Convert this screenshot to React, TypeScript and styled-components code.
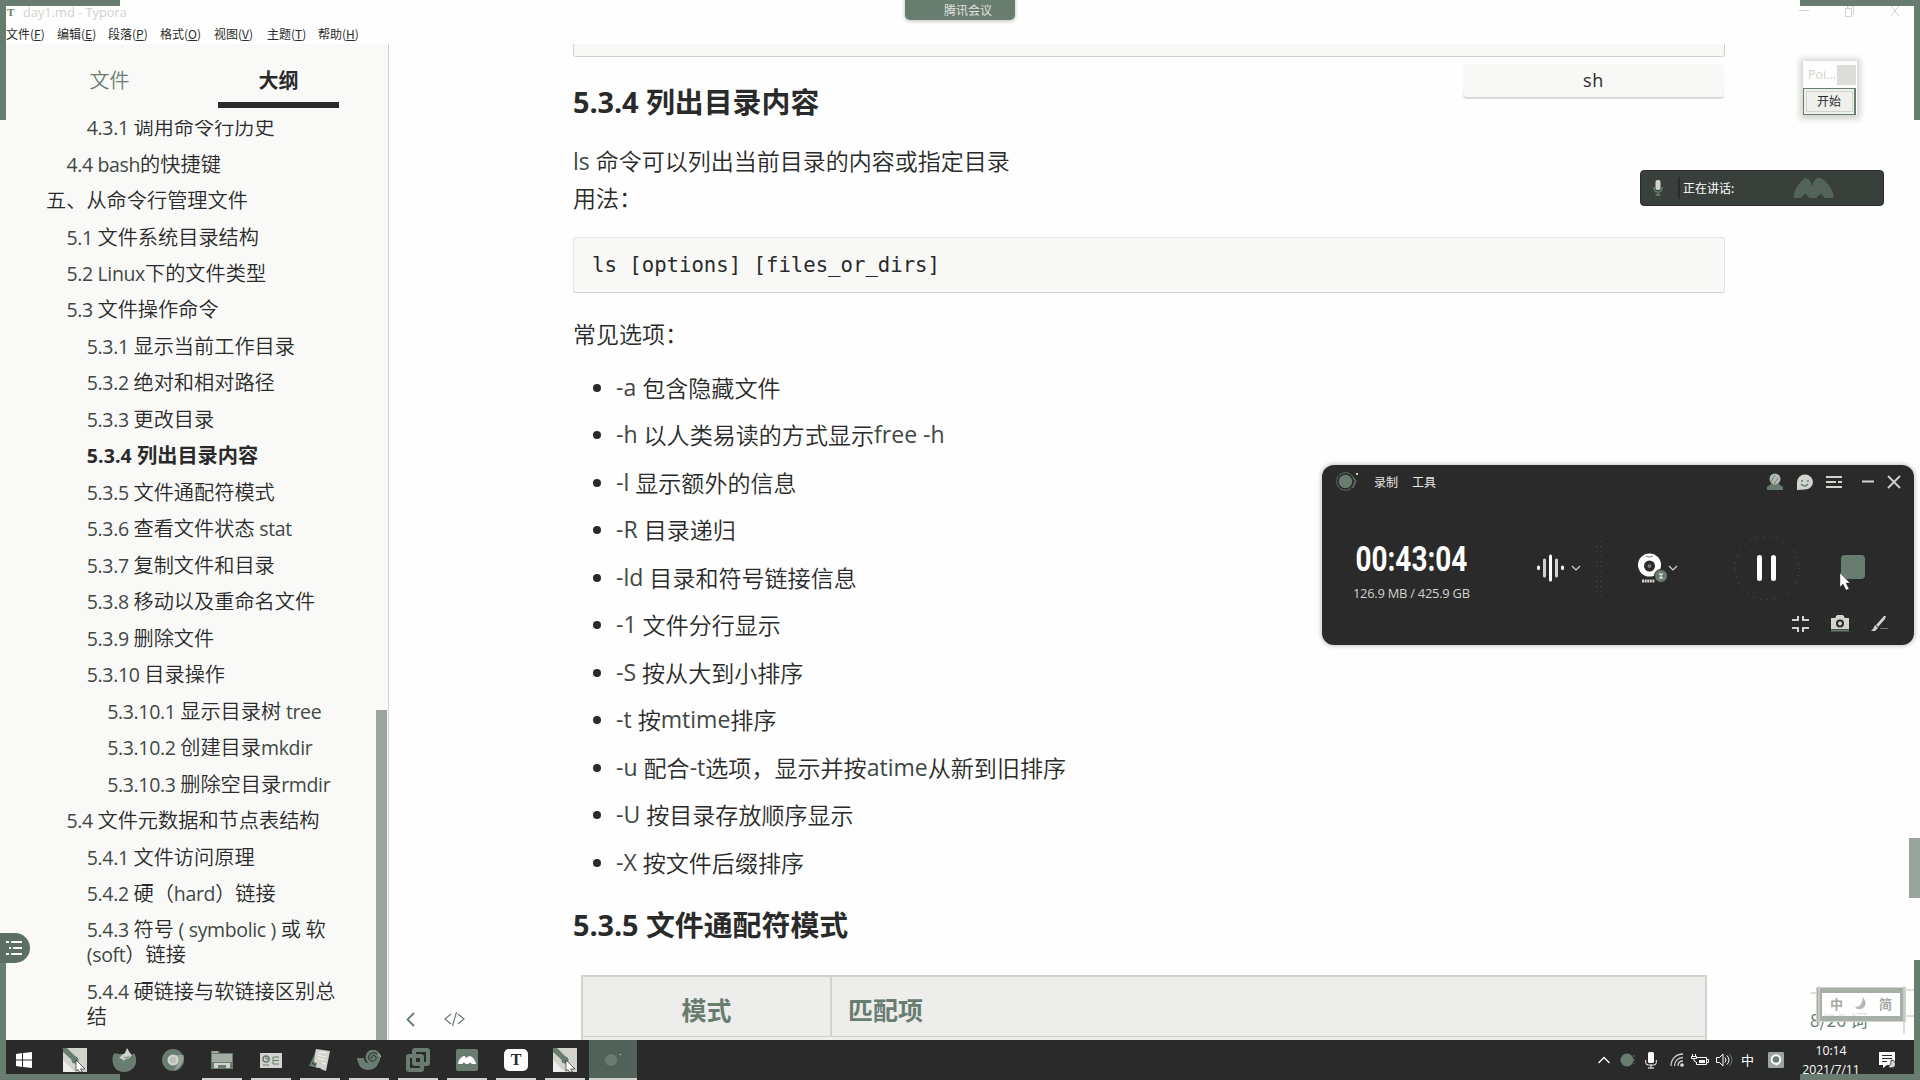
import React from 'react';
import styled, { createGlobalStyle } from 'styled-components';

const ink = '#2a2a2a';
const green = '#687c70';
const pale = '#d2d3cd';
const paper = '#fdfefd';
const cjk = '"Noto Sans CJK SC", sans-serif';

const GlobalStyle = createGlobalStyle`
  * { box-sizing: border-box; }
  html, body { margin: 0; padding: 0; }
  body { width: 1920px; height: 1080px; overflow: hidden; background: ${paper}; color: ${ink}; font-family: "Open Sans", ${cjk}; }
`;

const Screen = styled.div`
  position: relative;
  width: 1920px;
  height: 1080px;
  overflow: hidden;
  display: flex;
  flex-direction: column;
`;

const Run = styled.span<{ $track: number; $size?: number; $bold?: boolean }>`
  letter-spacing: ${p => p.$track}px;
  font-family: "Open Sans", ${cjk};
  font-weight: ${p => (p.$bold ? 700 : 400)};
  color: ${p => (p.$bold ? ink : '#414844')};
  line-height: 0;
  ${p => (p.$size ? `font-size: ${p.$size}px;` : '')}
`;

function Mixed({ text, track, size, bold }: { text: string; track: number; size?: number; bold?: boolean }) {
  return (
    <>
      {text.split(/([\x20-\x7e]+)/).filter(Boolean).map((s, i) =>
        /^[\x20-\x7e]/.test(s) ? <Run key={i} $track={track} $size={size} $bold={bold}>{s}</Run> : s
      )}
    </>
  );
}

/* ---------- title and menu ---------- */
const TitleBar = styled.header`
  height: 22px;
  flex: none;
  display: flex;
  align-items: center;
  padding: 2px 19px 0 7px;
  color: ${pale};
  font-size: 12.8px;
`;
const AppGlyph = styled.span`
  width: 16px;
  font: bold 11px "Liberation Serif", serif;
  color: ${green};
`;
const WindowTitle = styled.span`
  flex: 1;
  white-space: nowrap;
`;
const MenuBar = styled.nav`
  height: 22px;
  flex: none;
  display: flex;
  padding: 0 0 0 6px;
  font: 12px/23px ${cjk};
`;
const MenuItem = styled.span<{ $w: number }>`
  width: ${p => p.$w}px;
  white-space: nowrap;
`;
const Body = styled.div`
  display: flex;
  height: 996px;
  flex: none;
`;

/* ---------- outline sidebar ---------- */
const Sidebar = styled.aside`
  width: 389px;
  flex: none;
  background: #f9faf8;
  border-right: 1px solid ${pale};
  display: flex;
  flex-direction: column;
`;
const Tabs = styled.div`
  height: 64px;
  flex: none;
  display: flex;
  padding-left: 49px;
  gap: 48px;
`;
const Tab = styled.div<{ $active?: boolean }>`
  width: 121px;
  text-align: center;
  font: ${p => (p.$active ? 700 : 350)} 20px/72px ${cjk};
  color: ${p => (p.$active ? ink : green)};
  border-bottom: 6px solid ${p => (p.$active ? ink : 'transparent')};
`;
const OutlineArea = styled.div`
  margin-top: 12px;
  flex: 1;
  min-height: 0;
  overflow: hidden;
  display: flex;
`;
const Outline = styled.ul`
  list-style: none;
  margin: -11.6px 0 0;
  padding: 0;
  width: 376px;
`;
const OutlineItem = styled.li<{ $depth: number; $active?: boolean }>`
  padding: 5.74px 20px 5.74px ${p => 46 + p.$depth * 20.4}px;
  font: ${p => (p.$active ? 700 : 350)} 20.2px/25px ${cjk};
  white-space: pre-line;
`;
const OutlineThumb = styled.div`
  margin-top: 590px;
  width: 11px;
  background: #9aa69d;
  flex: none;
`;

const outline: [number, string][] = [
  [2, '4.3.1 调用命令行历史'],
  [1, '4.4 bash的快捷键'],
  [0, '五、从命令行管理文件'],
  [1, '5.1 文件系统目录结构'],
  [1, '5.2 Linux下的文件类型'],
  [1, '5.3 文件操作命令'],
  [2, '5.3.1 显示当前工作目录'],
  [2, '5.3.2 绝对和相对路径'],
  [2, '5.3.3 更改目录'],
  [2, '5.3.4 列出目录内容'],
  [2, '5.3.5 文件通配符模式'],
  [2, '5.3.6 查看文件状态 stat'],
  [2, '5.3.7 复制文件和目录'],
  [2, '5.3.8 移动以及重命名文件'],
  [2, '5.3.9 删除文件'],
  [2, '5.3.10 目录操作'],
  [3, '5.3.10.1 显示目录树 tree'],
  [3, '5.3.10.2 创建目录mkdir'],
  [3, '5.3.10.3 删除空目录rmdir'],
  [1, '5.4 文件元数据和节点表结构'],
  [2, '5.4.1 文件访问原理'],
  [2, '5.4.2 硬（hard）链接'],
  [2, '5.4.3 符号 ( symbolic ) 或 软\n(soft）链接'],
  [2, '5.4.4 硬链接与软链接区别总\n结'],
];

/* ---------- document ---------- */
const Doc = styled.main`
  position: relative;
  flex: 1;
  overflow: hidden;
  padding-left: 184px;
`;
const PreviousBlock = styled.div`
  width: 1152px;
  height: 13px;
  background: #f8f8f6;
  border: 1px solid ${pale};
  border-top: 0;
  border-radius: 0 0 3px 3px;
`;
const Heading = styled.h4<{ $top: number }>`
  margin: ${p => p.$top}px 0 0;
  font: 700 28.9px/36px ${cjk};
`;
const Paragraph = styled.p<{ $top: number }>`
  margin: ${p => p.$top}px 0 0;
  font: 350 23px/36.5px ${cjk};
  white-space: pre-line;
`;
const CodeBlock = styled.pre`
  margin: 22px 0 0;
  width: 1152px;
  height: 56px;
  padding: 0 18px;
  background: #f8f8f6;
  border: 1px solid #e4e5e1;
  border-bottom-color: ${pale};
  border-radius: 3px;
  font: 20.65px/55px "DejaVu Sans Mono", monospace;
`;
const Options = styled.ul`
  list-style: none;
  margin: 12px 0 0;
  padding: 0 0 0 20px;
`;
const Option = styled.li`
  height: 47.5px;
  display: flex;
  align-items: center;
  font: 350 23.05px/36px ${cjk};
  white-space: pre;
  &::before {
    content: '';
    width: 8px;
    height: 8px;
    margin: 2px 15px 0 0;
    border-radius: 50%;
    background: ${ink};
  }
`;
const options = [
  '-a 包含隐藏文件',
  '-h 以人类易读的方式显示free -h',
  '-l 显示额外的信息',
  '-R 目录递归',
  '-ld 目录和符号链接信息',
  '-1 文件分行显示',
  '-S 按从大到小排序',
  '-t 按mtime排序',
  '-u 配合-t选项，显示并按atime从新到旧排序',
  '-U 按目录存放顺序显示',
  '-X 按文件后缀排序',
];
const Table = styled.div`
  margin: 34px 0 0 8px;
  width: 1126px;
  height: 80px;
  display: grid;
  grid-template-columns: 249px 1fr;
  grid-template-rows: 60px 20px;
  background: #ededec;
  border: 2px solid ${pale};
`;
const Th = styled.div<{ $center?: boolean }>`
  font: 700 25px/65px ${cjk};
  color: ${green};
  padding-left: ${p => (p.$center ? 0 : 16)}px;
  text-align: ${p => (p.$center ? 'center' : 'left')};
  border-right: ${p => (p.$center ? `2px solid ${pale}` : '0')};
  border-bottom: 1px solid ${pale};
`;

const LangTag = styled.div`
  position: absolute;
  left: 1463px;
  top: 64px;
  width: 261px;
  height: 34px;
  background: #f8f8f6;
  border-bottom: 1px solid ${pale};
  border-radius: 4px;
  box-shadow: 0 1px 1px #dcddd9;
  text-align: center;
  font: 18px/32px "Open Sans", sans-serif;
  letter-spacing: 0.6px;
`;
const EditorTools = styled.div`
  position: absolute;
  left: 405px;
  top: 1009px;
  display: flex;
  gap: 26px;
`;
const WordCount = styled.div`
  position: absolute;
  left: 1810px;
  top: 1007px;
  font: 17.5px/26px ${cjk};
  color: ${green};
  white-space: nowrap;
`;
const PageThumb = styled.div`
  position: absolute;
  left: 1909px;
  top: 838px;
  width: 11px;
  height: 60px;
  background: #99a49c;
`;
const OutlineToggle = styled.div`
  position: absolute;
  left: 0;
  top: 933px;
  width: 30px;
  height: 30px;
  border-radius: 0 15px 15px 0;
  background: #5d6e64;
`;

/* ---------- floating windows ---------- */
const MeetingTag = styled.div`
  position: absolute;
  left: 905px;
  top: 0;
  width: 110px;
  height: 20px;
  padding-left: 39px;
  background: ${green};
  border-radius: 0 0 5px 5px;
  box-shadow: 0 1px 3px 1px ${pale};
  color: #e0e1dc;
  font: 12px/20px ${cjk};
`;
const PointWindow = styled.div`
  position: absolute;
  left: 1803px;
  top: 61px;
  width: 54px;
  height: 54px;
  display: flex;
  flex-direction: column;
  background: ${paper};
  box-shadow: 0 1px 6px 3px ${pale};
`;
const PointTitle = styled.div`
  height: 27px;
  display: flex;
  justify-content: space-between;
  padding: 4px 1px 3px 5px;
  font: 12.5px/19px "Open Sans", sans-serif;
  color: ${pale};
`;
const PointClose = styled.span`
  width: 19px;
  background: #dcddd8;
`;
const PointButton = styled.div`
  flex: 1;
  margin: 0 1px 0 0;
  border: 1px solid ${green};
  border-width: 1px 2px 1px 1px;
  outline: 1px solid ${pale};
  outline-offset: -4px;
  background: #efefec;
  text-align: center;
  font: 12px/24px ${cjk};
`;
const TalkBar = styled.div`
  position: absolute;
  left: 1640px;
  top: 170px;
  width: 244px;
  height: 36px;
  display: flex;
  align-items: center;
  background: #39403c;
  border: 1px solid ${ink};
  border-radius: 4px;
  padding-left: 12px;
  color: ${paper};
  font: 12px/36px ${cjk};
`;
const TalkDivider = styled.i`
  width: 2px;
  height: 22px;
  margin: 0 3px 0 15px;
  background: ${ink};
`;
const TalkLabel = styled.span`
  width: 109px;
`;

const Recorder = styled.section`
  position: absolute;
  left: 1322px;
  top: 465px;
  width: 592px;
  height: 180px;
  border-radius: 12px;
  background: ${ink};
  box-shadow: 0 0 4px 1px #c3c5bf;
  color: ${pale};
`;
const RecHead = styled.div`
  height: 34px;
  display: flex;
  align-items: center;
  padding: 0 8px 0 14px;
  font: 12px/34px ${cjk};
`;
const RecMenu = styled.span`
  margin-left: 14px;
  color: #e6e7e3;
`;
const Spacer = styled.span`
  flex: 1;
`;
const RecHeadIcons = styled.div`
  display: flex;
  align-items: center;
`;
const RecMain = styled.div`
  height: 106px;
  display: flex;
  align-items: center;
  padding: 30px 0 0 31px;
`;
const Clock = styled.div`
  width: 168px;
  padding-top: 9px;
`;
const Time = styled.div`
  width: 160px;
  font: 700 34.5px/36px Roboto, sans-serif;
  color: ${paper};
  transform: scaleX(0.81);
  transform-origin: 0 0;
  padding-left: 3px;
`;
const Storage = styled.div`
  padding-top: 7px;
  font: 12.9px/18px "Open Sans", sans-serif;
  letter-spacing: -0.25px;
  white-space: nowrap;
`;
const RecFoot = styled.div`
  height: 40px;
  display: flex;
  justify-content: flex-end;
  padding: 9px 26px 0 0;
  gap: 20px;
`;

/* ---------- taskbar ---------- */
const Taskbar = styled.footer`
  height: 40px;
  flex: none;
  display: flex;
  background: ${ink};
  color: ${paper};
`;
const TaskSlot = styled.div<{ $open?: boolean; $active?: boolean; $w?: number }>`
  width: ${p => p.$w ?? 49}px;
  padding-right: ${p => (p.$w === 50 ? 2 : 0)}px;
  display: flex;
  align-items: center;
  justify-content: center;
  background: ${p => (p.$active ? '#52625a' : 'transparent')};
  box-shadow: ${p => (p.$active ? 'inset 0 -2px ' + pale : 'none')};
  background-image: ${p => (p.$open ? `linear-gradient(${pale}, ${pale})` : 'none')};
  background-size: 40px 2px;
  background-position: center bottom;
  background-repeat: no-repeat;
`;
const Tray = styled.div`
  margin-left: auto;
  display: flex;
  align-items: center;
  padding-right: 18px;
  svg { flex: none; }
`;
const TrayItem = styled.div<{ $w: number }>`
  width: ${p => p.$w}px;
  display: flex;
  justify-content: center;
  font: 13px/18px ${cjk};
`;
const DateTime = styled.div`
  width: 82px;
  text-align: center;
  white-space: pre-line;
  font: 12.3px/19px "Open Sans", sans-serif;
  letter-spacing: -0.1px;
`;

const Edge = styled.i<{ $x: number; $y: number; $w: number; $h: number }>`
  position: absolute;
  left: ${p => p.$x}px;
  top: ${p => p.$y}px;
  width: ${p => p.$w}px;
  height: ${p => p.$h}px;
  background: ${green};
`;
const Layer = styled.svg<{ $x: number; $y: number }>`
  position: absolute;
  left: ${p => p.$x}px;
  top: ${p => p.$y}px;
`;
const ImeBar = styled.div`
  position: absolute;
  left: 1817px;
  top: 988px;
  width: 88px;
  height: 33px;
  display: flex;
  align-items: center;
  justify-content: space-around;
  padding: 0 2px 2px 2px;
  border: 5px solid #a5afa6;
  outline: 1px solid ${pale};
  background: #fdfefdcc;
  color: #a3aba3;
  font: 700 13px/18px ${cjk};
`;

const Disc = () => (
  <svg width="24" height="24" viewBox="0 0 24 24">
    <rect width="24" height="24" fill={pale} />
    <path d="M0 12v12h12z" fill="#eeefec" />
    <path d="M0 0h4l9 9-3 4L0 4z" fill={green} />
    <circle cx="12" cy="12" r="3.5" fill={green} />
    <path d="M13 12l9 9h-4.5l2 3h-3L15 21.5 13 23z" fill={paper} stroke={ink} strokeWidth=".7" />
  </svg>
);
const Peaks = ({ color = paper, w = 20 }: { color?: string; w?: number }) => (
  <svg width={w} height={w * 0.55} viewBox="0 0 20 11">
    <path d="M1 10C0 7 4 2 6 1c2 0 3 2 3 4 1-3 2-5 4-4 3 1 6 6 6 9h-4l-2-2-2 2H8L6 8l-2 2z" fill={color} />
  </svg>
);
const Logo = () => (
  <svg width="24" height="20" viewBox="0 0 24 20">
    <circle cx="9.500" cy="9.500" r="8.8" fill="none" stroke={green} strokeDasharray="3.5 .7" />
    <circle cx="9.500" cy="9.500" r="6.7" fill={green} />
    <path d="M17 5l3 4-3 7" fill="none" stroke={green} />
    <rect x="20" y="1" width="2" height="2" fill={pale} />
  </svg>
);

const menus: [string, string, number][] = [
  ['文件', 'F', 51], ['编辑', 'E', 51], ['段落', 'P', 52], ['格式', 'O', 54],
  ['视图', 'V', 53], ['主题', 'T', 51], ['帮助', 'H', 50],
];

export default function App() {
  return (
    <>
      <GlobalStyle />
      <Screen>
        <TitleBar>
          <AppGlyph>T</AppGlyph>
          <WindowTitle>day1.md - Typora</WindowTitle>
          <svg width="102" height="12" viewBox="0 0 102 12" fill="none" stroke={pale}>
            <path d="M0 4.500h10M46.500 2.500h6v8h-6zM48.500 2v-2h6v8h-2M92 0l8 10M100 0l-8 10" />
          </svg>
        </TitleBar>
        <MenuBar>
          {menus.map(([name, key, w]) => (
            <MenuItem key={key} $w={w}>{name}(<u>{key}</u>)</MenuItem>
          ))}
        </MenuBar>
        <Body>
          <Sidebar>
            <Tabs>
              <Tab>文件</Tab>
              <Tab $active>大纲</Tab>
            </Tabs>
            <OutlineArea>
              <Outline>
                {outline.map(([depth, text]) => {
                  const active = text.startsWith('5.3.4');
                  return (
                    <OutlineItem key={text} $depth={depth} $active={active}>
                      <Mixed text={text} track={active ? 0.1 : -0.35} size={19.5} bold={active} />
                    </OutlineItem>
                  );
                })}
              </Outline>
              <OutlineThumb />
            </OutlineArea>
          </Sidebar>
          <Doc>
            <PreviousBlock />
            <Heading $top={24.5}><Mixed text="5.3.4 列出目录内容" track={-0.1} bold /></Heading>
            <Paragraph $top={24.5}><Mixed text={'ls 命令可以列出当前目录的内容或指定目录\n用法：'} track={0} /></Paragraph>
            <CodeBlock>ls [options] [files_or_dirs]</CodeBlock>
            <Paragraph $top={21.500}>常见选项：</Paragraph>
            <Options>
              {options.map(o => <Option key={o}><Mixed text={o} track={0} /></Option>)}
            </Options>
            <Heading $top={19}><Mixed text="5.3.5 文件通配符模式" track={-0.1} bold /></Heading>
            <Table>
              <Th $center>模式</Th>
              <Th>匹配项</Th>
            </Table>
          </Doc>
        </Body>
        <Taskbar>
          <TaskSlot $w={50}>
            <svg width="16" height="16" viewBox="0 0 16 16" fill={paper}>
              <path d="M0 2l6-1v6.500H0zM7 1l9-1v7.500H7zM0 8.500h6V15l-6-1zM7 8.500h9V16l-9-1z" />
            </svg>
          </TaskSlot>
          <TaskSlot><Disc /></TaskSlot>
          <TaskSlot>
            <svg width="24" height="24" viewBox="0 0 24 24">
              <path d="M1 7l2-2 1 1 1-1 1 1 6 0 2 2 6-1 2-2 1 2c4 8-2 17-11 17S-1 16 1 7z" fill={green} />
              <path d="M13 5l2-5 3 5 2 2-3 3-3 1-2 3-2-3-3-1 3-3z" fill={pale} />
              <path d="M12 9l2 1 3-2M11 12l4 1" stroke={green} fill="none" />
            </svg>
          </TaskSlot>
          <TaskSlot>
            <svg width="22" height="22" viewBox="0 0 22 22">
              <circle cx="11" cy="11" r="11" fill={green} />
              <path d="M11 6h10.500c1 7-3 13-9.500 15.500l3-6z" fill="#96a199" />
              <circle cx="11" cy="11" r="5.500" fill={pale} />
              <circle cx="11" cy="11" r="3.300" fill="#b9bfb7" />
            </svg>
          </TaskSlot>
          <TaskSlot $open>
            <svg width="22" height="18" viewBox="0 0 22 18">
              <path d="M0 0h8l1 2h13v16H0z" fill={green} />
              <path d="M1 3h20v8H1z" fill="#a3ada4" />
              <path d="M3 17v-5h16v5h-4v-3H7v3z" fill={pale} />
              <path d="M1 1h6" stroke={pale} />
            </svg>
          </TaskSlot>
          <TaskSlot $open>
            <svg width="22" height="15" viewBox="0 0 22 15">
              <rect width="22" height="15" fill={pale} />
              <circle cx="6" cy="6" r="3" fill="none" stroke={green} strokeWidth="1.500" />
              <path d="M6 3v3h3M13 4h6M13 7.500h6M13 11h6M13 4v7M3 12h6" stroke={green} fill="none" />
            </svg>
          </TaskSlot>
          <TaskSlot $open>
            <svg width="22" height="22" viewBox="0 0 22 22">
              <path d="M7 0l14 2-4 20-14-5z" fill={pale} />
              <path d="M9 3l9 1M8 6l9 2M8 9l8 2M13 14l4 1" stroke="#f0f1ee" />
              <path d="M6 4l-6 13 7 1 1-4-3-1z" fill={green} />
              <path d="M3 14l3 2M9 19l3 1" stroke={ink} />
            </svg>
          </TaskSlot>
          <TaskSlot $open>
            <svg width="24" height="20" viewBox="0 0 24 20">
              <path d="M0 8h7c0 3 2 5 5 5 5 1 9-1 11-5-1 7-5 12-12 12C4 20 1 15 0 8z" fill={green} />
              <circle cx="16" cy="7" r="7.500" fill={green} />
              <path d="M15 9c-2-3 3-5 4-2 1 4-5 6-7 2-2-5 5-8 8-5" fill="none" stroke={ink} />
              <path d="M22 4l2 3" stroke={pale} />
            </svg>
          </TaskSlot>
          <TaskSlot $open>
            <svg width="24" height="24" viewBox="0 0 24 24" fill="none" stroke={green} strokeWidth="4">
              <rect x="8" y="2" width="14" height="14" rx="1" />
              <rect x="2" y="8" width="14" height="14" rx="1" />
              <path d="M8 16V8h8" strokeWidth="2.500" />
            </svg>
          </TaskSlot>
          <TaskSlot $open>
            <svg width="22" height="22" viewBox="0 0 22 22">
              <rect width="22" height="22" rx="2" fill={green} />
              <path d="M2 15c0-4 4-8 6-8 1 0 2 1 2.500 2.500C11 8 12 7 14 7c3 1 6 5 6 8h-4l-2-1.500-2 1.500h-2L8 13.500 6 15z" fill={paper} />
            </svg>
          </TaskSlot>
          <TaskSlot $open>
            <svg width="24" height="22" viewBox="0 0 24 22">
              <rect width="24" height="22" rx="5" fill={paper} />
              <text x="12" y="16" textAnchor="middle" fontFamily="Liberation Serif, serif" fontWeight="700" fontSize="16" fill={ink}>T</text>
            </svg>
          </TaskSlot>
          <TaskSlot $open><Disc /></TaskSlot>
          <TaskSlot $active $w={48}>
            <svg width="20" height="16" viewBox="0 0 20 16">
              <circle cx="8" cy="8" r="6" fill={green} /><rect x="17" y="2" width="1" height="1" fill={pale} />
            </svg>
          </TaskSlot>
          <Tray>
            <TrayItem $w={38}><svg width="14" height="8" viewBox="0 0 14 8"><path d="M1.500 7L7 1.500 12.500 7" fill="none" stroke={paper} strokeWidth="1.300" /></svg></TrayItem>
            <TrayItem $w={10}><svg width="18" height="14" viewBox="0 0 18 14"><circle cx="8" cy="7" r="6.500" fill={green} /><path d="M15 2v9" stroke={green} strokeDasharray="2 2" /></svg></TrayItem>
            <TrayItem $w={36}>
              <svg width="12" height="17" viewBox="0 0 12 17"><rect x="3" width="6" height="11" rx="1.500" fill={paper} /><path d="M.7 8v2.500q0 2.500 2.500 2.500h5.600q2.500 0 2.500-2.500V8M6 13v3M3 16h6" fill="none" stroke={paper} /></svg>
            </TrayItem>
            <TrayItem $w={16}>
              <svg width="14" height="14" viewBox="0 0 14 14" fill="none" stroke={pale} strokeWidth="1.300"><path d="M1 13C1 6 6 1 13 1M4.500 13C4.500 8 8 4.500 13 4.500M8 13c0-3 2-5 5-5" /><circle cx="12" cy="12" r="1.200" fill={paper} /></svg>
            </TrayItem>
            <TrayItem $w={30}>
              <svg width="18" height="13" viewBox="0 0 18 13" fill="none" stroke={paper}><path d="M6 3.500h9.500v7H5.500V8" /><path d="M16 5.500h1.500v3H16" /><rect x="8" y="6" width="6" height="3" fill={paper} stroke="none" /><path d="M1.500 0v2M4.500 0v2M3 4v2q0 2 2 2M.5 2.500h5v2h-5z" /></svg>
            </TrayItem>
            <TrayItem $w={18}>
              <svg width="17" height="14" viewBox="0 0 17 14" fill="none" stroke={paper}><path d="M.5 4.500h3L7 1v12L3.500 9.500h-3zM9 4.500q2 2.500 0 5M11 2.500q4 4.500 0 9" /><path d="M13.500 1q5 6 0 12" stroke={green} /></svg>
            </TrayItem>
            <TrayItem $w={29}>中</TrayItem>
            <TrayItem $w={28}>
              <svg width="16" height="16" viewBox="0 0 16 16"><rect width="16" height="16" rx="1" fill="#9ba69e" /><circle cx="8" cy="7.500" r="4.300" fill={green} stroke={paper} strokeWidth="2" /><path d="M8 13l3-2" stroke={paper} strokeWidth="2" /></svg>
            </TrayItem>
            <DateTime>{'10:14\n2021/7/11'}</DateTime>
            <TrayItem $w={30}>
              <svg width="16" height="17" viewBox="0 0 16 17"><path d="M0 0h16v13H8l-4 3v-3H0z" fill={paper} /><path d="M3 3.500h10M3 6.500h10M3 9.500h5" stroke={ink} /><path d="M12 8a4 4 0 1 1-3 6q3 0 3-6z" fill={pale} stroke={ink} strokeWidth=".8" /></svg>
            </TrayItem>
          </Tray>
        </Taskbar>

        <LangTag>sh</LangTag>
        <EditorTools>
          <svg width="13" height="19" viewBox="0 0 13 19" fill="none" stroke={green} strokeWidth="1.800"><path d="M9 4L2.500 10.500 9 17" /></svg>
          <svg width="22" height="19" viewBox="0 0 22 19" fill="none" stroke={green} strokeWidth="1.200"><path d="M7 5L1 10l6 5M14 5l6 5-6 5M12.500 3l-4 14" /></svg>
        </EditorTools>
        <WordCount>8/26 词</WordCount>
        <PageThumb />
        <OutlineToggle>
          <svg width="30" height="30" viewBox="0 0 30 30" stroke={paper} strokeWidth="2"><path d="M6 9h3M11 9h11M9 15h2M13 15h9M6 21h3M11 21h11" /></svg>
        </OutlineToggle>

        <MeetingTag>腾讯会议</MeetingTag>
        <PointWindow>
          <PointTitle>Poi...<PointClose /></PointTitle>
          <PointButton>开始</PointButton>
        </PointWindow>
        <TalkBar>
          <svg width="10" height="16" viewBox="0 0 10 16"><rect x="2.500" width="5" height="10" rx="2" fill={pale} /><path d="M1 7q0 5 4 5t4-5M5 12v3M2.500 15h5" fill="none" stroke={green} strokeWidth="1.500" /></svg>
          <TalkDivider />
          <TalkLabel>正在讲话:</TalkLabel>
          <Peaks color="#55645b" w={44} />
        </TalkBar>

        <Recorder>
          <RecHead>
            <Logo />
            <RecMenu>录制</RecMenu>
            <RecMenu>工具</RecMenu>
            <Spacer />
            <RecHeadIcons>
              <svg width="140" height="18" viewBox="0 0 140 18">
                <path d="M1 17v-3l4-3h8l4 3v3z" fill={green} />
                <circle cx="9" cy="6" r="5.500" fill="#b5bcb4" /><path d="M5 9L9 2M8 11l4-6" stroke={green} />
                <path d="M31 17V9a8 7.500 0 1 1 8 7.500z" fill={pale} /><path d="M36 7v2M42 7v2M35 11q4 4 7 0" stroke={green} fill="none" strokeWidth="1.500" />
                <path d="M60 4h16M60 9h10M72 9h4M60 14h16" stroke={pale} strokeWidth="1.800" />
                <path d="M96 8.500h12" stroke={pale} strokeWidth="2" />
                <path d="M122 3l12 12M134 3l-12 12" stroke={pale} strokeWidth="1.800" />
              </svg>
            </RecHeadIcons>
          </RecHead>
          <RecMain>
            <Clock>
              <Time>00:43:04</Time>
              <Storage>126.9 MB / 425.9 GB</Storage>
            </Clock>
            <svg width="393" height="70" viewBox="0 0 393 70">
              <g stroke={paper} strokeLinecap="round" strokeWidth="3">
                <path d="M17.500 35v1.500M41.500 35v1.500M29.500 24v24" />
                <path d="M23.500 28v16M35.500 28v16" stroke={pale} />
              </g>
              <path d="M51 34l4 4 4-4M148 34l4 4 4-4" fill="none" stroke={pale} strokeWidth="1.200" />
              <path d="M76 9v56M80 9v56" stroke="#46524b" strokeDasharray="1 4" />
              <circle cx="128.500" cy="33" r="11.500" fill={paper} />
              <circle cx="128.500" cy="34" r="5.500" fill={ink} />
              <circle cx="128.500" cy="34" r="2" fill={green} />
              <path d="M125 24q3.500 2 7 0" stroke={green} fill="none" />
              <path d="M121 49h13" stroke={pale} strokeWidth="3" strokeDasharray="2 .6" />
              <circle cx="140" cy="44" r="6.500" fill={green} stroke={ink} />
              <path d="M138 42h4M138 46h4M140 42v4" stroke={pale} strokeWidth="1.500" />
              <circle cx="246" cy="36" r="32" fill="none" stroke="#56655c" strokeDasharray="1 6" />
              <path d="M238.500 25.500v21M252.500 25.500v21" stroke={paper} strokeWidth="5" strokeLinecap="round" />
              <rect x="320" y="23" width="24" height="24" rx="4" fill={green} />
              <path d="M319 41l10 10h-4l3 6-3 1-3-6-3 3z" fill={paper} stroke={ink} strokeWidth=".4" />
            </svg>
          </RecMain>
          <RecFoot>
            <svg width="19" height="20" viewBox="0 0 19 20" fill="none" stroke={pale} strokeWidth="2"><path d="M1 6h6V2M12 2v4h6M1 14h6v4M12 18v-4h6" /></svg>
            <svg width="20" height="20" viewBox="0 0 20 20"><path d="M1 4h4l2-3h6l2 3h4v11H1z" fill={pale} /><circle cx="10" cy="9.500" r="4" fill={ink} /><circle cx="10" cy="9.500" r="2" fill={pale} /><path d="M1 16.500h18" stroke={green} strokeWidth="2" /></svg>
            <svg width="18" height="20" viewBox="0 0 18 20"><path d="M6 11l8-9h2l-1 3-7 8z" fill={pale} /><path d="M5 11l3 3-3 3H1l2-2z" fill={pale} /><path d="M10 14.500h8" stroke={green} /></svg>
          </RecFoot>
        </Recorder>

        <ImeBar>
          <span>中</span>
          <svg width="12" height="13" viewBox="0 0 12 13"><path d="M8 0q6 9-2 12-4 1-6-2 7 0 8-10z" fill="#b3bab2" /></svg>
          <span>简</span>
        </ImeBar>
        <Layer $x={1810} $y={984} width="110" height="52" viewBox="0 0 110 52" stroke={pale} fill="none">
          <path d="M1 9h6M9 2v40M94 2v48M94 6h20M94 32h18" strokeWidth="1.500" />
        </Layer>

        <Edge $x={0} $y={0} $w={120} $h={6} />
        <Edge $x={0} $y={0} $w={6} $h={120} />
        <Edge $x={1800} $y={0} $w={120} $h={6} />
        <Edge $x={1914} $y={0} $w={6} $h={120} />
        <Edge $x={0} $y={963} $w={6} $h={117} />
        <Edge $x={0} $y={1074} $w={120} $h={6} />
        <Edge $x={1914} $y={960} $w={6} $h={120} />
        <Edge $x={1800} $y={1074} $w={120} $h={6} />
      </Screen>
    </>
  );
}
